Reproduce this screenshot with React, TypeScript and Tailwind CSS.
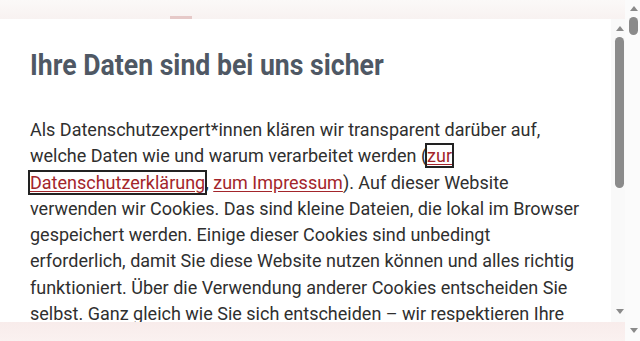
function ArrowUp({ className }: { className?: string }) {
  return (
    <svg width="8" height="5" viewBox="0 0 8 5" className={className}>
      <path d="M4 0 L8 5 L0 5 Z" fill="#8a8a8a" />
    </svg>
  );
}

function ArrowDown({ className }: { className?: string }) {
  return (
    <svg width="8" height="5" viewBox="0 0 8 5" className={className}>
      <path d="M0 0 L8 0 L4 5 Z" fill="#8a8a8a" />
    </svg>
  );
}

export default function App() {
  return (
    <div className="flex h-[341px] overflow-hidden font-['Roboto',sans-serif]">
      <div className="flex flex-1 flex-col bg-[#f9efee]">
        {/* Seitenkopf hinter dem Dialog */}
        <div className="h-[19px] shrink-0 bg-gradient-to-b from-[#fbf9f8] to-[#f8f2f1] pl-[170px] pt-[16px]">
          <div className="h-[3px] w-[22px] bg-[#e6c9c8]" />
        </div>

        {/* Cookie-Dialog */}
        <div className="flex h-[303px] shrink-0 bg-white">
          <div className="flex-1 overflow-hidden px-[30px] pt-[28px]">
            <h2 className="origin-left scale-x-[0.918] whitespace-nowrap text-[29px] font-bold leading-[36px] text-[#4f5864]">
              Ihre Daten sind bei uns sicher
            </h2>
            <p className="mt-[34px] text-[18px] leading-[26.3px] text-[#2f2f2f]">
              Als Datenschutzexpert*innen klären wir transparent darüber auf, welche Daten wie und warum
              verarbeitet werden (
              <a href="#" className="text-[#a3252b] underline underline-offset-2 outline-2 outline-[#222] outline-solid">
                zur Datenschutzerklärung
              </a>
              ,{' '}
              <a href="#" className="text-[#a3252b] underline underline-offset-2">
                zum Impressum
              </a>
              ). Auf dieser Website verwenden wir Cookies. Das sind kleine Dateien, die lokal im Browser
              gespeichert werden. Einige dieser Cookies sind unbedingt erforderlich, damit Sie diese Website
              nutzen können und alles richtig funktioniert. Über die Verwendung anderer Cookies entscheiden
              Sie selbst. Ganz gleich wie Sie sich entscheiden – wir respektieren Ihre Wahl. Ihre
              Einstellungen können Sie jederzeit ändern.
            </p>
          </div>
          {/* Scrollleiste des Dialogs */}
          <div className="flex w-[14px] shrink-0 flex-col items-center bg-[#f9f9f9] pt-[7px] pb-[8px]">
            <ArrowUp className="ml-[3px]" />
            <div className="ml-[3px] mt-[6px] h-[151px] w-[9px] rounded-full bg-[#8b8b8b]" />
            <div className="flex-1" />
            <ArrowDown className="ml-[3px]" />
          </div>
        </div>

        <div className="flex-1 bg-gradient-to-b from-[#f8eceb] to-[#faf1f0]" />
      </div>

      {/* Scrollleiste der Seite */}
      <div className="flex w-[15px] shrink-0 flex-col items-center bg-[#fbfbfb] pt-[6px] pb-[8px]">
        <ArrowUp className="ml-[2px]" />
        <div className="ml-[2px] mt-[6px] h-[18px] w-[9px] rounded-full bg-[#8b8b8b]" />
        <div className="flex-1" />
        <ArrowDown className="ml-[2px]" />
      </div>
    </div>
  );
}
